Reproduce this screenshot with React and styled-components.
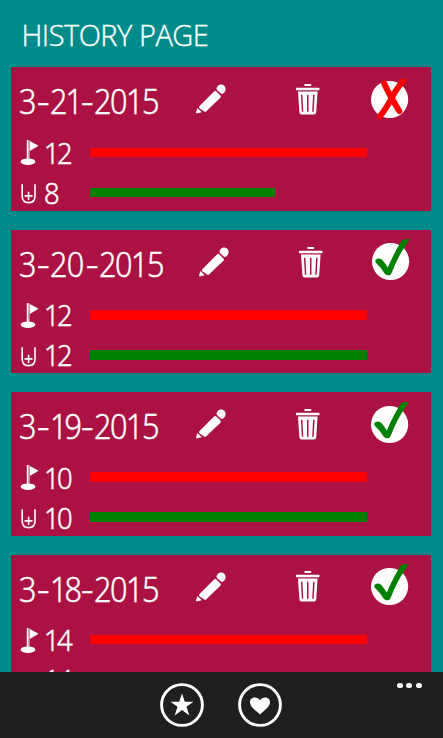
import React from "react";
import styled, { createGlobalStyle } from "styled-components";

const GlobalStyle = createGlobalStyle`
  body {
    margin: 0;
    overflow: hidden;
    background: #008b8b;
  }
`;

const Page = styled.main`
  display: flex;
  flex-direction: column;
  width: 443px;
  height: 738px;
  overflow: hidden;
  background: #008b8b;
  color: #fff;
  font-family: "Open Sans", "Noto Sans", sans-serif;
`;

const Title = styled.h1`
  flex: none;
  box-sizing: border-box;
  height: 67.4px;
  margin: 0;
  padding: 15px 0 0 21.5px;
  font-size: 29px;
  font-weight: 300;
  line-height: 40px;
  letter-spacing: -0.5px;
  white-space: nowrap;
  -webkit-text-stroke: 0.35px #fff;
`;

const List = styled.section`
  flex: 1;
  min-height: 0;
  display: flex;
  flex-direction: column;
  gap: 18.8px;
  padding: 0 12px 0 11px;
  overflow: hidden;
`;

const Card = styled.article`
  flex: none;
  box-sizing: border-box;
  height: 143.6px;
  padding: 10px 0 0 9px;
  background: #ab1243;
`;

const CardHeader = styled.header`
  display: grid;
  grid-template-columns: ${(p) => p.$columns};
  height: 52px;

  svg {
    display: block;
    overflow: visible;
  }
`;

const DateText = styled.h2`
  display: grid;
  grid-template-columns: 18px 12.8px ${(p) => p.$day}px 12.7px auto;
  justify-content: start;
  margin: 2px 0 0 -0.6px;
  font-size: 34px;
  font-weight: 300;
  line-height: 44px;
  white-space: nowrap;
  -webkit-text-stroke: 0.6px #fff;
`;

const Digits = styled.span`
  justify-self: start;
  letter-spacing: ${(p) => p.$tracking ?? -1.6}px;
  transform: scaleX(0.9);
  transform-origin: left center;
`;

const Hyphen = styled.span`
  transform: scaleX(1.15);
  transform-origin: left center;
`;

const ScoreRow = styled.div`
  display: grid;
  grid-template-columns: 24px 46.3px 277.2px;
  align-items: center;
  height: 40px;
`;

const ScoreValue = styled.span`
  justify-self: start;
  padding-top: 1.6px;
  font-size: 29.5px;
  font-weight: 300;
  line-height: 38.4px;
  letter-spacing: -2.8px;
  -webkit-text-stroke: 0.6px #fff;
  transform: scaleX(0.93);
  transform-origin: left center;
`;

const Bar = styled.div`
  height: 9.6px;
  background: ${(p) => p.$color};
`;

const IconSlot = styled.span`
  padding-top: ${(p) => p.$top}px;
`;

const Scores = styled.div`
  padding-top: 3px;
`;

const AppBar = styled.footer`
  flex: none;
  box-sizing: border-box;
  display: grid;
  grid-template-columns: 44px 44px 1fr auto;
  column-gap: 34px;
  align-items: start;
  height: 66.4px;
  padding: 11.4px 21.5px 0 160px;
  background: #1f1f1f;
`;

const RoundButton = styled.button`
  width: 44px;
  height: 44px;
  padding: 0;
  border: 0;
  background: none;

  svg {
    display: block;
  }
`;

const MoreDots = styled.div`
  grid-column: 4;
  display: flex;
  gap: 3.6px;
  margin-top: -0.5px;

  i {
    width: 5.8px;
    height: 5.8px;
    border-radius: 50%;
    background: #fff;
  }
`;

const Pencil = () => (
  <svg width="30" height="30" viewBox="0 0 30 30" fill="#fff">
    <path d="M.4 29 1.6 24.6 5.2 28Z" stroke="#fff" strokeWidth=".8" strokeLinejoin="round" />
    <path d="M3.3 22.3 18 7.6Q19.2 6.4 20.4 7.6L24.4 11.6Q25.4 12.6 24.4 13.8L10 27.5Q8.8 28.2 7.8 27.2L3.2 24.2Q2.6 23 3.3 22.3Z" />
    <path d="M20.6 5C20.6 1.4 25-1 28 1.6C31 4.3 29.4 9 26.2 10Q25.4 10.2 24.8 9.6L21 5.9Z" />
  </svg>
);

const Trash = () => (
  <svg width="24" height="31" viewBox="0 0 24 31">
    <rect x="8.2" y="0" width="7.2" height="1.9" rx=".8" fill="#fff" />
    <rect x="0" y="3.7" width="23.4" height="2.6" rx=".5" fill="#fff" />
    <path
      fill="#fff"
      fillRule="evenodd"
      d="M2 7.6H21.6L20.2 28.2Q20 30.4 18 30.4H5.6Q3.5 30.4 3.4 28.2ZM4.9 10.8L5.9 27.7H7.3L6.4 10.8ZM11 10.8V27.7H12.5V10.8ZM17.1 10.8L16.2 27.7H17.7L18.6 10.8Z"
    />
  </svg>
);

const Passed = () => (
  <svg width="38" height="38" viewBox="0 0 38 38">
    <circle cx="18.6" cy="20.5" r="18.6" fill="#fff" />
    <path
      fill="#008000"
      d="M4 18.4Q7.5 16.2 10.4 19Q13.5 22.7 15.8 26.5Q23 10 29.8-.4Q31.3-2.4 37.5-1.9Q37.9-1.2 35.5 1.4Q25.7 15.6 19.6 32Q18.8 34.5 16 34.2Q13.8 34.2 12.6 32.5Q10 27.4 4.3 22.2Q2.3 20 4 18.4Z"
    />
  </svg>
);

const Failed = () => (
  <svg width="38" height="38" viewBox="0 0 38 38">
    <circle cx="18.6" cy="21.5" r="18.6" fill="#fff" />
    <path d="M13.2 5.6Q18.5 17.4 28.3 33" fill="none" stroke="#f00" strokeWidth="6" strokeLinecap="round" />
    <path d="M32 3.2Q24 13 20 21.3Q16 29 9 38.3" fill="none" stroke="#f00" strokeWidth="6" strokeLinecap="round" />
  </svg>
);

const Flag = () => (
  <svg width="24" height="30" viewBox="0 0 24 30" fill="#fff">
    <rect x="6.8" y="3" width="1.4" height="20" />
    <rect x="8.5" y="3" width=".9" height="20" />
    <path d="M9.8 4 18.6 8.8 9.8 14Z" />
    <ellipse cx="8" cy="24.7" rx="7.3" ry="3.3" />
  </svg>
);

const Cup = () => (
  <svg width="24" height="30" viewBox="0 0 24 30" fill="none" stroke="#fff" strokeWidth="1.6">
    <path d="M2.2 7.2V19Q2.2 25.6 8.6 25.6Q15 25.6 15 19V7.2" />
    <path d="M8.6 14.8V23M4.6 18.9H12.6" />
  </svg>
);

const Favorites = () => (
  <svg width="44" height="44" viewBox="0 0 44 44">
    <circle cx="22" cy="22" r="20.4" fill="none" stroke="#fff" strokeWidth="2.9" />
    <path fill="#fff" d="M22 10.5 24.8 18.7H33.4L26.5 23.7 29.3 32.5 22 27.1 14.7 32.5 17.5 23.7 10.6 18.7H19.2Z" />
  </svg>
);

const Heart = () => (
  <svg width="44" height="44" viewBox="0 0 44 44">
    <circle cx="22" cy="22" r="20.4" fill="none" stroke="#fff" strokeWidth="2.9" />
    <path fill="#fff" d="M22 31.5C19 28.3 12 24.5 12 19C12 13.7 19.4 13 22 17.4C24.6 13 32 13.7 32 19C32 24.5 25 28.3 22 31.5Z" />
  </svg>
);

const NARROW = "175.6px 100.7px 74.3px 38px";
const WIDE = "179.1px 100.2px 73px 38px";

const entries = [
  { date: "3-21-2015", goal: 12, done: 8, columns: NARROW, day: 31, tracking: -2.2 },
  { date: "3-20-2015", goal: 12, done: 12, columns: WIDE, day: 36, tracking: -0.8 },
  { date: "3-19-2015", goal: 10, done: 10, columns: NARROW, day: 31, tracking: -3.2 },
  { date: "3-18-2015", goal: 14, done: 14, columns: NARROW, day: 31, tracking: -3.2 },
];

function HistoryCard({ date, goal, done, columns, day, tracking }) {
  const [month, dayText, year] = date.split("-");
  return (
    <Card>
      <CardHeader $columns={columns}>
        <DateText $day={day}>
          <Digits>{month}</Digits>
          <Hyphen>-</Hyphen>
          <Digits $tracking={tracking}>{dayText}</Digits>
          <Hyphen>-</Hyphen>
          <Digits>{year}</Digits>
        </DateText>
        <IconSlot $top={7}><Pencil /></IconSlot>
        <IconSlot $top={6.8}><Trash /></IconSlot>
        <IconSlot $top={done < goal ? 0.7 : 1.7}>{done < goal ? <Failed /> : <Passed />}</IconSlot>
      </CardHeader>
      <Scores>
        <ScoreRow>
          <Flag />
          <ScoreValue>{goal}</ScoreValue>
          <Bar $color="#ff0000" />
        </ScoreRow>
        <ScoreRow>
          <Cup />
          <ScoreValue>{done}</ScoreValue>
          <Bar $color="#008000" style={{ width: `${(done / goal) * 100}%` }} />
        </ScoreRow>
      </Scores>
    </Card>
  );
}

export default function App() {
  return (
    <>
      <GlobalStyle />
      <Page>
        <Title>HISTORY PAGE</Title>
        <List>
          {entries.map((entry) => (
            <HistoryCard key={entry.date} {...entry} />
          ))}
        </List>
        <AppBar>
          <RoundButton aria-label="Favorites"><Favorites /></RoundButton>
          <RoundButton aria-label="Like"><Heart /></RoundButton>
          <MoreDots><i /><i /><i /></MoreDots>
        </AppBar>
      </Page>
    </>
  );
}
